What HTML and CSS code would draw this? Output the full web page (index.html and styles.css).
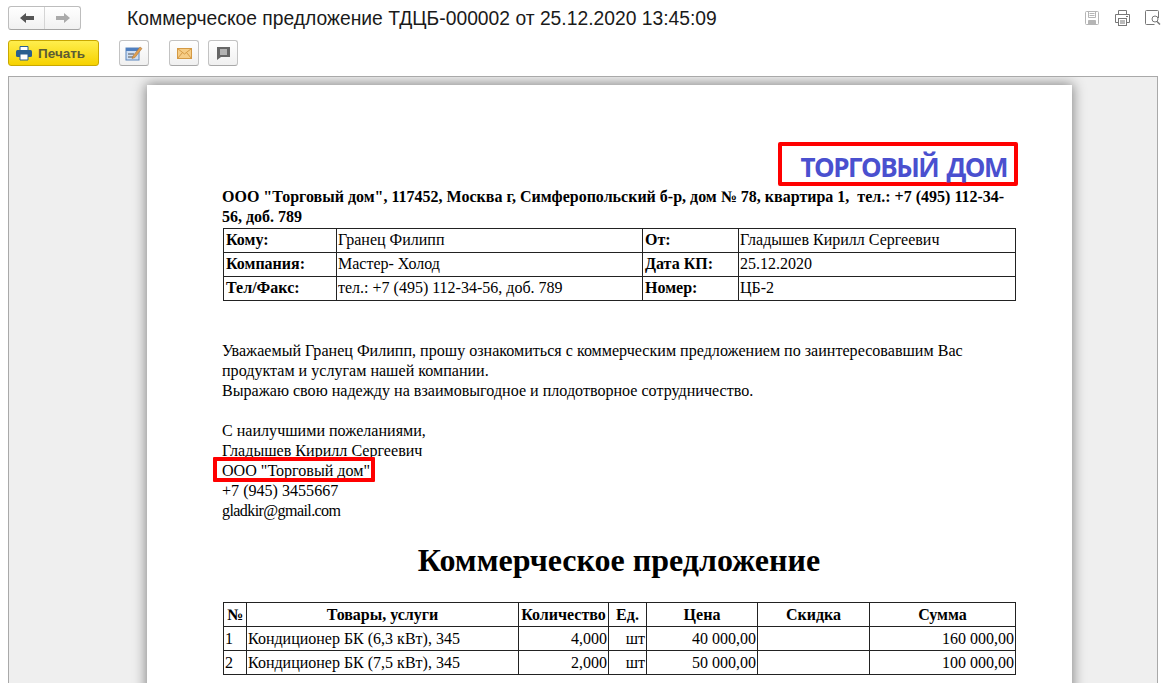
FILE: index.html
```html
<!DOCTYPE html>
<html lang="ru">
<head>
<meta charset="utf-8">
<title>Коммерческое предложение</title>
<link rel="stylesheet" href="styles.css">
</head>
<body>
<div class="app">
  <header class="top">
    <div class="row-title">
      <div class="nav">
        <button class="nav-btn"><svg width="16" height="12" viewBox="0 0 16 12"><path d="M1 6l6-5v3h8v4H7v3z" fill="#555"/></svg></button>
        <button class="nav-btn"><svg width="16" height="12" viewBox="0 0 16 12"><path d="M15 6L9 1v3H1v4h8v3z" fill="#aaa"/></svg></button>
      </div>
      <h1 class="title">Коммерческое предложение ТДЦБ-000002 от 25.12.2020 13:45:09</h1>
      <div class="tools">
        <svg width="16" height="16" viewBox="0 0 16 16" fill="none" stroke="#b5b5b5"><rect x="1.5" y="1.5" width="13" height="13" rx="1"/><path d="M4.5 1.5v6h7v-6M5.5 3.5h5M5.5 5.5h5"/><path d="M4.5 14.5v-4h7v4" fill="#b5b5b5"/></svg>
        <svg width="17" height="16" viewBox="0 0 17 16" fill="none" stroke="#777"><path d="M4.5 4.5v-4h8v4M4.500 12.500h-3v-8h14v8h-3"/><rect x="4.5" y="8.5" width="8" height="7"/><path d="M6 11h5M6 13h5M12 6.5h2"/></svg>
        <svg width="16" height="16" viewBox="0 0 16 16" fill="none" stroke="#777"><path d="M13.5 8V1.5a1 1 0 0 0-1-1h-11a1 1 0 0 0-1 1v12a1 1 0 0 0 1 1h8"/><circle cx="10" cy="9" r="3"/><path d="M12 11.500l3 3" stroke-width="1.500"/></svg>
      </div>
    </div>
    <div class="row-actions">
      <button class="print"><svg width="16" height="15" viewBox="0 0 16 15"><path d="M4 .5h8v4H4z" fill="#fff" stroke="#2a5f8f"/><rect x="0" y="4" width="16" height="7" rx="1.500" fill="#2a5f8f"/><path d="M4 8h8v6H4z" fill="#fff" stroke="#2a5f8f"/></svg>Печать</button>
      <button class="tool tool-edit"><svg width="18" height="16" viewBox="0 0 18 16"><rect x="1" y="3" width="13" height="12" fill="#cfdff3" stroke="#5a86bd"/><path d="M1 3h13v3H1z" fill="#4f7fc0"/><path d="M3 9h6M3 12h5" stroke="#555"/><path d="M8 11l7-9 2 1.500-7 9-3 1z" fill="#e0a050" stroke="#a06a30" stroke-width=".5"/></svg></button>
      <button class="tool tool-mail"><svg width="15" height="11" viewBox="0 0 15 11"><rect x=".5" y=".5" width="14" height="10" fill="#f6cd86" stroke="#d49a45"/><path d="M.5.5l7 5.500 7-5.500M.5 10.500l5-6M14.500 10.500l-5-6" fill="none" stroke="#d49a45"/></svg></button>
      <button class="tool"><svg width="13" height="13" viewBox="0 0 13 13"><path d="M0 0h13v10H4l-4 3z" fill="#666"/><path d="M3 3h7M3 5h7M3 7h7" stroke="#fff"/></svg></button>
    </div>
  </header>
  <main class="viewport">
    <article class="sheet">
      <div class="logo-line"><div class="logo">ТОРГОВЫЙ ДОМ</div></div>
      <p class="company">ООО "Торговый дом", 117452, Москва г, Симферопольский б-р, дом № 78, квартира 1,&nbsp; тел.: +7 (495) 112-34-56, доб. 789</p>
      <table class="grid info">
        <colgroup><col class="i1"><col class="i2"><col class="i3"><col class="i4"></colgroup>
        <tr><th>Кому:</th><td>Гранец Филипп</td><th>От:</th><td>Гладышев Кирилл Сергеевич</td></tr>
        <tr><th>Компания:</th><td>Мастер- Холод</td><th>Дата КП:</th><td>25.12.2020</td></tr>
        <tr><th>Тел/Факс:</th><td>тел.: +7 (495) 112-34-56, доб. 789</td><th>Номер:</th><td>ЦБ-2</td></tr>
      </table>
      <div class="letter">
        <p class="para">Уважаемый Гранец Филипп, прошу ознакомиться с коммерческим предложением по заинтересовавшим Вас продуктам и услугам нашей компании.<br>Выражаю свою надежду на взаимовыгодное и плодотворное сотрудничество.</p>
        <p class="para">С наилучшими пожеланиями,<br>Гладышев Кирилл Сергеевич<br><span class="marked">ООО "Торговый дом"</span><br>+7 (945) 3455667<br><span class="email">gladkir@gmail.com</span></p>
      </div>
      <h2 class="heading">Коммерческое предложение</h2>
      <table class="grid goods">
        <colgroup><col class="g1"><col class="g2"><col class="g3"><col class="g4"><col class="g5"><col class="g6"><col class="g7"></colgroup>
        <tr class="head"><th>№</th><th>Товары, услуги</th><th>Количество</th><th>Ед.</th><th>Цена</th><th>Скидка</th><th>Сумма</th></tr>
        <tr><td>1</td><td>Кондиционер БК (6,3 кВт), 345</td><td class="num">4,000</td><td class="num">шт</td><td class="num">40 000,00</td><td></td><td class="num">160 000,00</td></tr>
        <tr><td>2</td><td>Кондиционер БК (7,5 кВт), 345</td><td class="num">2,000</td><td class="num">шт</td><td class="num">50 000,00</td><td></td><td class="num">100 000,00</td></tr>
      </table>
    </article>
  </main>
</div>
</body>
</html>
```
FILE: styles.css
```css
* { box-sizing: border-box; }
html, body { margin: 0; height: 683px; overflow: hidden; background: #fff; }
.app { height: 683px; display: flex; flex-direction: column; font-family: "Liberation Sans", Arial, sans-serif; }
.top { height: 76px; padding: 6px 0 0 8px; flex: none; }
.row-title { display: flex; align-items: center; height: 24px; }
.nav { display: flex; width: 73px; height: 24px; border: 1px solid #bdbdbd; border-bottom-color: #a5a5a5; border-radius: 3px; background: linear-gradient(#fff, #f1f1f1); }
.nav-btn { flex: 1; border: 0; padding: 0; background: none; display: flex; align-items: center; justify-content: center; }
.nav-btn + .nav-btn { border-left: 1px solid #d5d5d5; }
.title { margin: 2px 0 0 46px; font-size: 19.3px; font-weight: 400; color: #1a1a1a; white-space: nowrap; }
.tools { margin-left: auto; padding-right: 6px; display: flex; gap: 14px; align-items: center; }
.row-actions { display: flex; align-items: center; margin-top: 10px; height: 26px; }
.print { width: 91px; height: 26px; border: 1px solid #c9a800; border-radius: 3px; background: linear-gradient(#ffee4d, #f6d200); display: flex; align-items: center; gap: 6px; padding: 0 0 0 7px; font: 700 13.500px "Liberation Sans", Arial, sans-serif; color: #5c5c34; }
.tool { width: 30px; height: 26px; margin-left: 9px; border: 1px solid #c3c3c3; border-bottom-color: #a8a8a8; border-radius: 3px; background: linear-gradient(#fff, #f0f0f0); display: flex; align-items: center; justify-content: center; padding: 0; }
.tool-edit { margin-left: 20px; }
.tool-mail { margin-left: 20px; }
.viewport { flex: 1; min-height: 0; margin: 0 9px 0 8px; background: #efefef; border: 1px solid #a9a9a9; border-width: 1px 1px 0; padding: 8px 0 0 138px; overflow: hidden; }
.sheet { width: 925px; height: 700px; background: #fff; box-shadow: 0 0 12px 1px rgba(0,0,0,.45); padding: 57px 56px 0 75px; font: 16px/20px "Liberation Serif", "Times New Roman", serif; color: #000; }
.logo-line { display: flex; justify-content: flex-end; margin-right: -2px; }
.logo { width: 240px; height: 44px; border: 4px solid #f00; border-radius: 2px; padding-right: 7px; text-align: right; font: 700 26px/43px "Open Sans", sans-serif; letter-spacing: -1.500px; word-spacing: 3px; color: #4a50cf; white-space: nowrap; }
.company { margin: 1px 0 0; font-weight: 700; }
.grid { border-collapse: collapse; table-layout: fixed; width: 792px; margin-left: 1px; }
.grid th, .grid td { border: 1px solid #222; height: 24px; padding: 0 1px; font-size: 16px; line-height: 20px; white-space: nowrap; overflow: hidden; }
.info { margin-top: 1px; }
.info th, .info td { padding-bottom: 2px; }
.info th { text-align: left; padding-left: 2px; }
.i1 { width: 113px; } .i2 { width: 306px; } .i3 { width: 96px; } .i4 { width: 277px; }
.letter { margin-top: 40px; font-size: 16.08px; }
.para { margin: 0 0 20px; }
.para:last-child { margin-bottom: 0; }
.email { letter-spacing: -.6px; }
.marked { position: relative; }
.marked::after { content: ""; position: absolute; left: -9px; right: -5px; top: -5px; bottom: -3px; border: 4px solid #f00; border-radius: 1px; }
.heading { margin: 18px 0 0; font-size: 32px; line-height: 42px; font-weight: 700; text-align: center; }
.goods { margin-top: 21px; }
.head th { text-align: center; }
.goods .num { text-align: right; }
.g1 { width: 23px; } .g2 { width: 272px; } .g3 { width: 90px; } .g4 { width: 38px; } .g5 { width: 111px; } .g6 { width: 112px; } .g7 { width: 146px; }
```
